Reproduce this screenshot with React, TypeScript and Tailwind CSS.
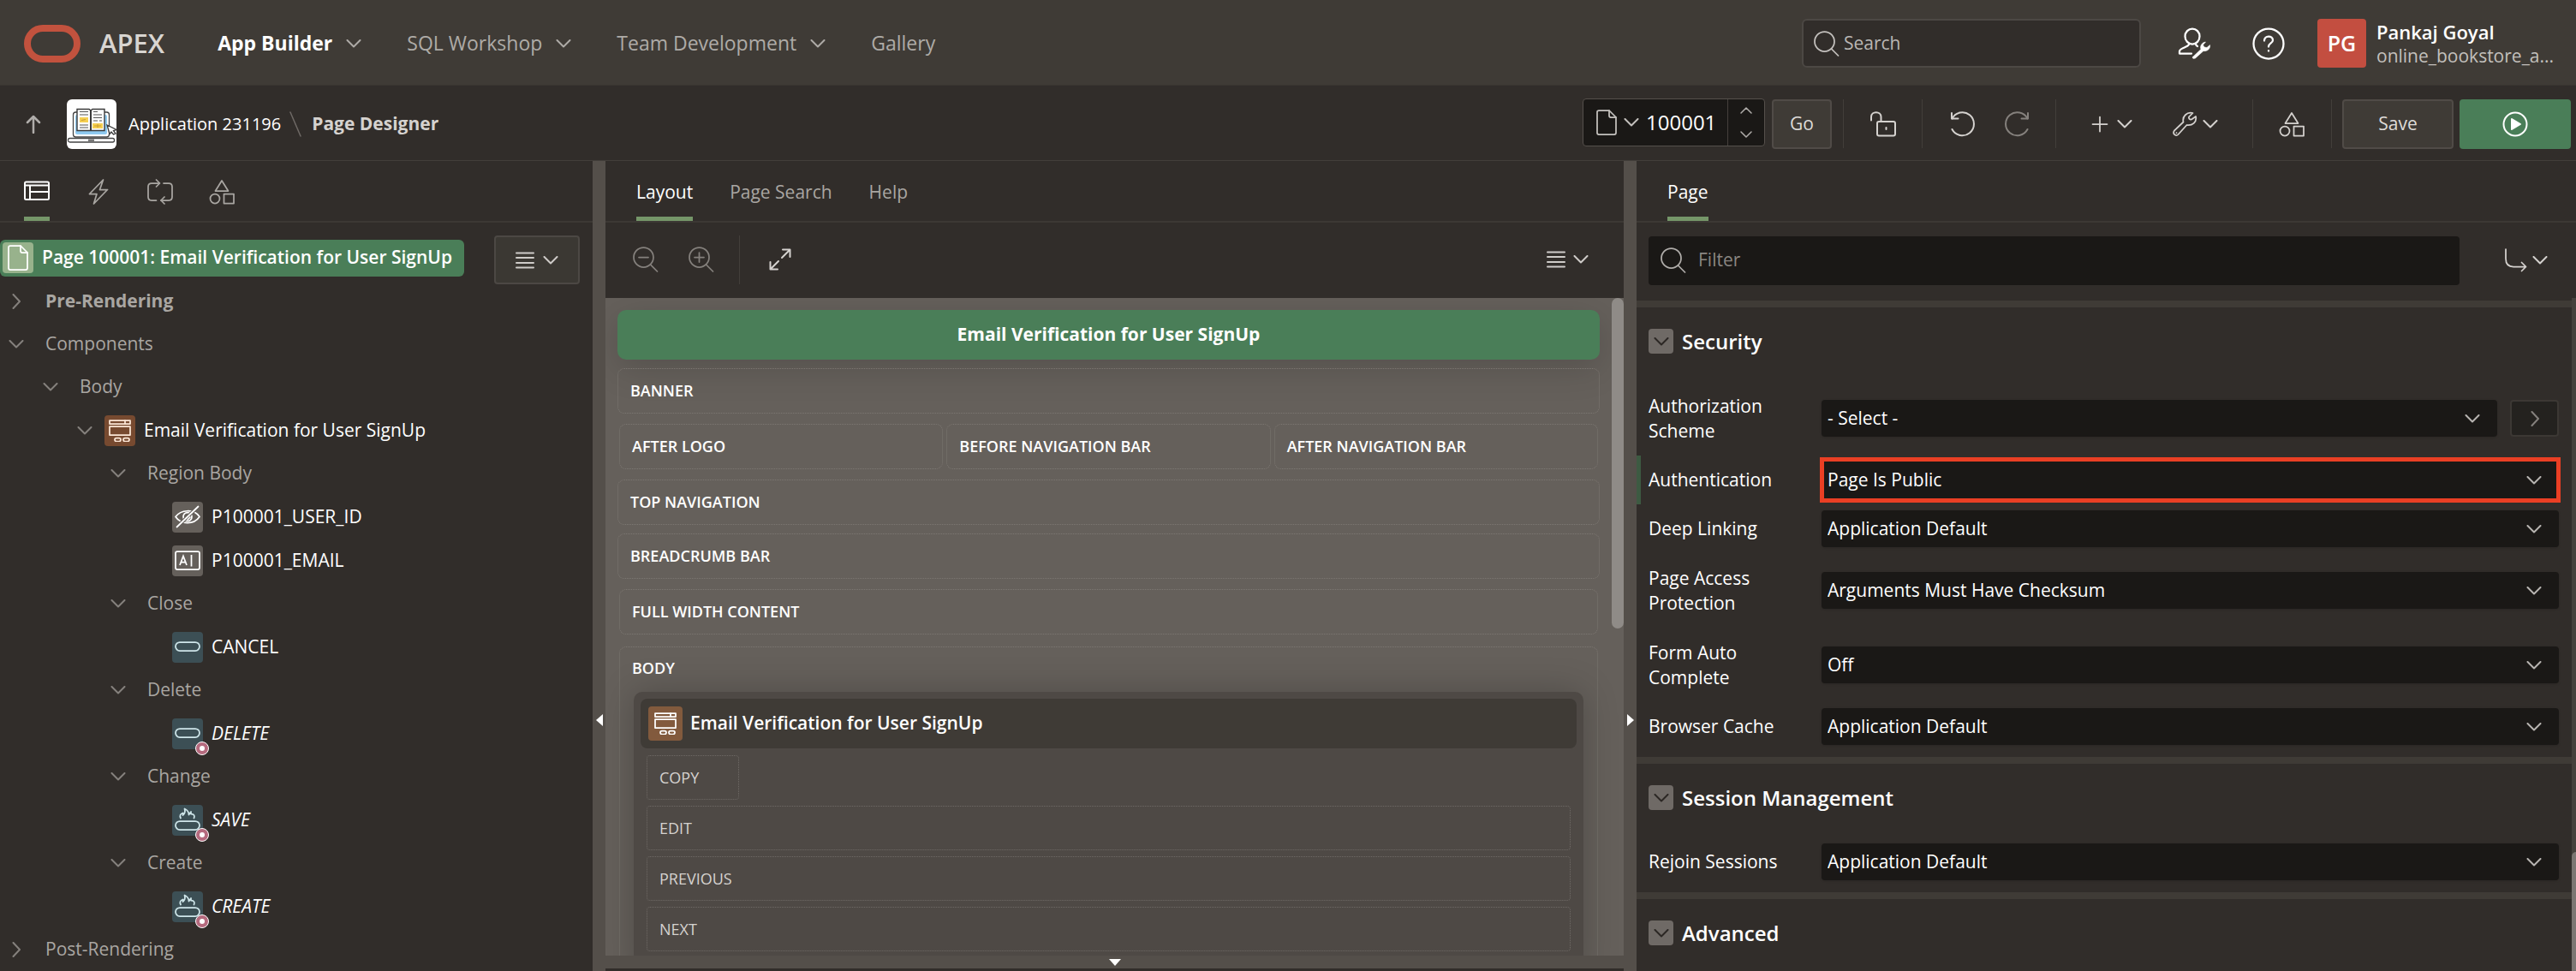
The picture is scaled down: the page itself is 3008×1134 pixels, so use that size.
import type { ReactNode } from "react";

/* ---------- icons ---------- */

type IconProps = { w: number; h: number; className?: string; sw?: number; children: ReactNode };

function Icon({ w, h, className = "", sw = 2, children }: IconProps) {
  return (
    <svg
      width={w}
      height={h}
      viewBox={`0 0 ${w} ${h}`}
      fill="none"
      stroke="currentColor"
      strokeWidth={sw}
      strokeLinecap="round"
      strokeLinejoin="round"
      aria-hidden="true"
      className={`shrink-0 ${className}`}
    >
      {children}
    </svg>
  );
}

const ChevronDown = ({ className = "" }: { className?: string }) => (
  <Icon w={18} h={10} className={className}>
    <path d="M1.5 1L9 8.5L16.5 1" />
  </Icon>
);

const ChevronRight = ({ className = "" }: { className?: string }) => (
  <Icon w={18} h={18} className={className}>
    <path d="M5.5 1L13 9L5.5 17" />
  </Icon>
);

const SmallChevron = ({ up = false }: { up?: boolean }) => (
  <Icon w={14} h={8} sw={1.5} className="text-[#b0adaa]">
    <path d={up ? "M1 7L7 1L13 7" : "M1 1L7 7L13 1"} />
  </Icon>
);

const Lines = () => (
  <Icon w={22} h={20} className="text-[#cfccc9]">
    <path d="M1 1.5H21M1 7H21M1 13H21M1 18.5H21" />
  </Icon>
);

const Magnifier = ({ className = "", children }: { className?: string; children?: ReactNode }) => (
  <Icon w={30} h={30} sw={1.75} className={className}>
    <circle cx="12.5" cy="12.5" r="11.5" />
    <path d="M20.5 21L28.5 29" />
    {children}
  </Icon>
);

const Shapes = ({ className = "" }: { className?: string }) => (
  <Icon w={30} h={30} sw={1.75} className={className}>
    <path d="M15 2L22.5 14H7.5Z" />
    <circle cx="7" cy="23" r="5.5" />
    <rect x="17.5" y="17.5" width="11.5" height="11" />
  </Icon>
);

const Page = ({ className = "" }: { className?: string }) => (
  <Icon w={24} h={30} sw={1.75} className={className}>
    <path d="M3 1H15L23 9V27Q23 29 21 29H3Q1 29 1 27V3Q1 1 3 1Z" />
    <path d="M15 1V7Q15 9 17 9H23" />
  </Icon>
);

const RegionGlyph = ({ className = "" }: { className?: string }) => (
  <Icon w={26} h={26} sw={1.75} className={className}>
    <rect x="1" y="1" width="24" height="4" />
    <path d="M19 1V5" />
    <rect x="1" y="8" width="24" height="10" />
    <rect x="7" y="21.5" width="7" height="4" rx="2" />
    <rect x="17" y="21.5" width="7" height="4" rx="2" />
  </Icon>
);

const HiddenGlyph = () => (
  <Icon w={36} h={36} sw={1.75} className="text-white">
    <path d="M4 17.5C10 9.5 25 7.5 32 17.5C25 27.5 10 26.5 4 17.5Z" />
    <circle cx="18" cy="17.5" r="5" />
    <path d="M30.5 5.5L5.5 29.5" stroke="#65605b" strokeWidth="4" />
    <path d="M30.5 5.5L5.5 29.5" />
    <path d="M16.500 19.500L19.500 16.500" transform="translate(1.500 1.500)" />
  </Icon>
);

const TextFieldGlyph = () => (
  <svg width={36} height={36} viewBox="0 0 36 36" fill="none" stroke="white" strokeWidth={1.75} aria-hidden="true">
    <rect x="4" y="7" width="28" height="21" rx="2" />
    <path d="M22.5 11V24.5" />
    <path d="M9 23L13 12.5L17 23M10.5 19.5H15.5" />
  </svg>
);

const ButtonGlyph = ({ hot = false }: { hot?: boolean }) => (
  <Icon w={36} h={36} sw={1.75} className="text-[#cfe6ea]">
    {hot ? (
      <>
        <rect x="4" y="19" width="28" height="10" rx="5" />
        <path d="M10 15.5C8.5 12.5 9.5 10.5 12.5 9.5V12C15 10 15.5 7.5 14.5 4.5C18 6 19.5 8.5 19.5 11.5L22 8V10.5C26 10.5 26.5 13 25.5 15.5" />
      </>
    ) : (
      <rect x="4" y="12" width="28" height="10" rx="5" />
    )}
  </Icon>
);

const AppLogo = () => (
  <svg width={58} height={58} viewBox="0 0 58 58" className="shrink-0 rounded-md bg-white" fill="none" aria-hidden="true">
    <rect x="7.5" y="15" width="42" height="29" rx="3" stroke="#444" strokeWidth="1.3" fill="white" />
    <rect x="10" y="18" width="37" height="23" rx="2" fill="#8fcaf0" />
    <path d="M12 11.5H26L28 13L30 11.5H44V36.5H12Z" fill="white" stroke="#3a3a3a" strokeWidth="1.4" />
    <path d="M28 13V36.5" stroke="#3a3a3a" strokeWidth="2" />
    <path d="M15 14.5H25M15 18H25M15 30H25M15 33H25M31 14.5H36M31 18H41M31 21.5H41M31 25H36M38 25H41" stroke="#555" strokeWidth="1.2" />
    <rect x="15" y="21" width="10" height="6" fill="#f5cf52" />
    <rect x="30" y="28" width="12" height="6" fill="#f5cf52" />
    <path d="M17 24.5L22 23.5M32 31H40M36 29V33" stroke="#c89b2e" />
    <path d="M47 30L58 35.5L54.5 36.5L57 40L54.5 41L52 38L50 40.5Z" fill="white" stroke="#3a3a3a" strokeWidth="1.3" />
    <rect x="1.5" y="45.5" width="54" height="4.5" rx="2" fill="white" stroke="#444" strokeWidth="1.3" />
    <rect x="25" y="46.5" width="7" height="2.5" fill="#777" />
  </svg>
);

/* ---------- header ---------- */

const NAV = [
  { label: "App Builder", menu: true, active: true },
  { label: "SQL Workshop", menu: true, active: false },
  { label: "Team Development", menu: true, active: false },
  { label: "Gallery", menu: false, active: false },
];

function Header() {
  return (
    <header className="flex h-[100px] shrink-0 items-center border-b border-[#393531] bg-[#3f3b36] pt-[2px] pr-5 pl-7">
      <svg width="66" height="44" viewBox="0 0 66 44" fill="none" aria-hidden="true" className="shrink-0">
        <rect x="4" y="4" width="58" height="36" rx="18" stroke="#c2523e" strokeWidth="8" />
      </svg>
      <span className="ml-[22px] text-[31px] font-semibold text-[#d8d5d1]">APEX</span>
      <nav className="ml-[62px] flex items-center gap-[53px]">
        {NAV.map((n) => (
          <a
            key={n.label}
            href="#"
            className={
              n.active
                ? "flex items-center gap-4 text-[23px] font-bold whitespace-nowrap text-white"
                : "flex items-center gap-4 text-[23px] whitespace-nowrap text-[#aeaba7]"
            }
          >
            {n.label}
            {n.menu && <ChevronDown className="text-[#aeaba7]" />}
          </a>
        ))}
      </nav>
      <label className="ml-auto flex h-[57px] w-[396px] items-center rounded-md border-2 border-[#4c4844] bg-[#312d2a] pl-3">
        <Magnifier className="text-[#c4c1be]" />
        <input
          type="search"
          placeholder="Search"
          aria-label="Search"
          className="ml-[5px] min-w-0 flex-1 bg-transparent text-[21px] text-white outline-none placeholder:text-[#bab7b4]"
        />
      </label>
      <button type="button" aria-label="Administration" className="ml-[43px] text-white">
        <Icon w={39} h={37} sw={2.25}>
          <ellipse cx="17" cy="10.5" rx="8.5" ry="9" />
          <path d="M13 20C12 22 10 22.5 6.5 24C3.5 25.3 2 26 2 28V30.5H16" />
          <path d="M21 19.5C21.3 21 22 21.5 23 22" />
          <path
            d="M17.5 34.5L27 25.5C25.5 22 28 17.5 32.5 17L29.5 20.5L31 23L34 23.5L37.5 20.5C38.5 25 34 28.5 30 27.5L20.5 36C18 37 16.5 36 17.5 34.5Z"
            fill="currentColor"
            strokeWidth="0.5"
          />
        </Icon>
      </button>
      <button type="button" aria-label="Help" className="ml-[48px] text-white">
        <Icon w={38} h={38} sw={2.25}>
          <circle cx="19" cy="19" r="17.5" />
          <path d="M14 15.5C14 9 24 9 24 15C24 18.5 19 18.5 19 22.5" />
          <path d="M19 27V27.5" />
        </Icon>
      </button>
      <button type="button" className="ml-[38px] flex items-center text-left">
        <span className="flex size-[57px] items-center justify-center rounded bg-[#c34e40] text-[25px] font-semibold text-white">
          PG
        </span>
        <span className="ml-3 flex w-[213px] flex-col">
          <span className="text-[22px] leading-7 font-semibold text-white">Pankaj Goyal</span>
          <span className="text-[21px] leading-7 whitespace-nowrap text-[#c3c0bd]">online_bookstore_a...</span>
        </span>
      </button>
    </header>
  );
}

/* ---------- page toolbar ---------- */

const Rule = ({ className = "" }: { className?: string }) => (
  <span className={`h-[57px] w-px shrink-0 bg-[#423e3a] ${className}`} />
);

function Toolbar() {
  return (
    <div className="flex h-[88px] shrink-0 items-center border-b border-[#423e3a] pt-[2px] pr-[6px] pl-[30px]">
      <button type="button" aria-label="Up" className="text-[#b0adaa]">
        <Icon w={18} h={22} sw={2.5}>
          <path d="M9 21V2M2 9L9 2L16 9" />
        </Icon>
      </button>
      <a href="#" className="ml-[30px] flex items-center gap-[14px] text-[20px] font-medium whitespace-nowrap text-white">
        <AppLogo />
        Application 231196
      </a>
      <Icon w={14} h={30} sw={1.5} className="ml-[10px] text-[#6f6a66]">
        <path d="M1 1L13 29" />
      </Icon>
      <h1 className="ml-3 text-[21px] font-bold whitespace-nowrap text-[#d5d2cf]">Page Designer</h1>

      <div className="mb-1 ml-auto flex h-[56px] w-[213px] items-center rounded border border-[#55504c] bg-[#1a1816]">
        <button type="button" aria-label="Select page" className="ml-[15px] flex items-center gap-2 text-[#c4c1be]">
          <Page />
          <ChevronDown />
        </button>
        <input
          type="text"
          aria-label="Page number"
          defaultValue="100001"
          className="ml-2 w-full min-w-0 flex-1 bg-transparent text-[24px] font-medium text-white outline-none"
        />
        <div className="flex h-full w-[43px] flex-col items-center justify-between border-l border-[#45403c] py-[9px]">
          <button type="button" aria-label="Next page" className="flex">
            <SmallChevron up />
          </button>
          <button type="button" aria-label="Previous page" className="flex">
            <SmallChevron />
          </button>
        </div>
      </div>
      <button type="button" className="ml-2 h-[58px] w-[70px] rounded border-2 border-[#504b47] bg-[#3f3b36] text-[21px] text-[#dedbd8]">
        Go
      </button>
      <Rule className="ml-[13px]" />
      <button type="button" aria-label="Page unlocked" className="ml-[31px] text-[#d5d2cf]">
        <Icon w={30} h={30}>
          <path d="M1 10.5V6.5C1 -0.5 12.5 -0.5 12.5 6.5V11" />
          <rect x="8" y="12" width="21" height="16.5" rx="2" />
          <path d="M18.5 19V21" />
        </Icon>
      </button>
      <Rule className="ml-[30px]" />
      <button type="button" aria-label="Undo" className="ml-8 text-[#d5d2cf]">
        <Icon w={30} h={30}>
          <path d="M2 2V8.5H9.5" />
          <path d="M2.5 8.5A13.5 13.5 0 1 1 2.5 21" />
        </Icon>
      </button>
      <button type="button" aria-label="Redo" className="ml-[33px] text-[#85817d]">
        <Icon w={30} h={30}>
          <path d="M28 2V8.5H20.5" />
          <path d="M27.5 8.5A13.5 13.5 0 1 0 27.5 21" />
        </Icon>
      </button>
      <Rule className="ml-[30px]" />
      <button type="button" aria-label="Create" className="ml-[41px] flex items-center gap-[10px] text-[#d5d2cf]">
        <Icon w={20} h={20} sw={1.75}>
          <path d="M10 1.5V18.5M1.5 10H18.5" />
        </Icon>
        <ChevronDown />
      </button>
      <button type="button" aria-label="Utilities" className="ml-[47px] flex items-center gap-[6px] text-[#d5d2cf]">
        <Icon w={29} h={30} sw={1.75}>
          <path d="M2 22.5L12.5 12.5C11 6 16.5 0.5 23.5 2L19 6.5C18.5 8.5 20 10 22 9.5L27 6C28.5 12.5 23 17 16.5 16L6.5 27C3.5 30 -0.5 26 2 22.5Z" />
          <path d="M4.5 25V25.2" />
        </Icon>
        <ChevronDown />
      </button>
      <Rule className="ml-10" />
      <button type="button" aria-label="Shared components" className="ml-[30px] text-[#d5d2cf]">
        <Shapes />
      </button>
      <Rule className="ml-[31px]" />
      <button type="button" className="ml-3 h-[58px] w-[130px] rounded border-2 border-[#504b47] bg-[#3f3b36] text-[21px] text-[#dedbd8]">
        Save
      </button>
      <button type="button" aria-label="Save and run page" className="ml-[7px] flex h-[58px] w-[130px] items-center justify-center rounded bg-[#4a7e58] text-white">
        <Icon w={30} h={30}>
          <circle cx="15" cy="15" r="13.5" />
          <path d="M11 9L21 15L11 21Z" fill="currentColor" />
        </Icon>
      </button>
    </div>
  );
}

/* ---------- left pane: rendering tree ---------- */

type NodeIcon = "region" | "hidden" | "text" | "button" | "hot";
type TreeNode = {
  label: string;
  level: 0 | 1 | 2 | 3 | 4;
  open?: boolean;
  icon?: NodeIcon;
  conditional?: boolean;
  bold?: boolean;
};

const TREE: TreeNode[] = [
  { label: "Pre-Rendering", level: 0, open: false, bold: true },
  { label: "Components", level: 0, open: true },
  { label: "Body", level: 1, open: true },
  { label: "Email Verification for User SignUp", level: 2, open: true, icon: "region" },
  { label: "Region Body", level: 3, open: true },
  { label: "P100001_USER_ID", level: 4, icon: "hidden" },
  { label: "P100001_EMAIL", level: 4, icon: "text" },
  { label: "Close", level: 3, open: true },
  { label: "CANCEL", level: 4, icon: "button" },
  { label: "Delete", level: 3, open: true },
  { label: "DELETE", level: 4, icon: "button", conditional: true },
  { label: "Change", level: 3, open: true },
  { label: "SAVE", level: 4, icon: "hot", conditional: true },
  { label: "Create", level: 3, open: true },
  { label: "CREATE", level: 4, icon: "hot", conditional: true },
  { label: "Post-Rendering", level: 0, open: false },
];

const INDENT = ["pl-[10px]", "pl-[50px]", "pl-[90px]", "pl-[129px]", "pl-[169px]"];

const TILE: Record<NodeIcon, string> = {
  region: "bg-[#774a30]",
  hidden: "bg-[#65605b]",
  text: "bg-[#65605b]",
  button: "bg-[#3c4f55]",
  hot: "bg-[#3c4f55]",
};

function NodeTile({ icon, conditional }: { icon: NodeIcon; conditional?: boolean }) {
  return (
    <span className={`relative ml-[14px] flex size-9 shrink-0 items-center justify-center rounded ${TILE[icon]}`}>
      {icon === "region" && <RegionGlyph className="text-[#fbe6d6]" />}
      {icon === "hidden" && <HiddenGlyph />}
      {icon === "text" && <TextFieldGlyph />}
      {icon === "button" && <ButtonGlyph />}
      {icon === "hot" && <ButtonGlyph hot />}
      {conditional && (
        <span className="absolute -right-[7px] -bottom-[7px] flex size-4 items-center justify-center rounded-full border border-white bg-[#b56a7e]">
          <span className="size-[6px] rounded-full bg-white" />
        </span>
      )}
    </span>
  );
}

function labelClass(n: TreeNode) {
  if (n.icon) {
    return n.conditional
      ? "ml-[10px] font-medium whitespace-nowrap text-white italic"
      : "ml-[10px] font-medium whitespace-nowrap text-white";
  }
  return n.bold
    ? "ml-[25px] font-bold whitespace-nowrap text-[#a9a6a2]"
    : "ml-[25px] whitespace-nowrap text-[#a9a6a2]";
}

function TreePane() {
  return (
    <section aria-label="Rendering" className="flex w-[692px] shrink-0 flex-col">
      <div role="tablist" className="flex h-[72px] shrink-0 gap-[42px] border-b-2 border-[#3c3834] pl-7 text-[#a9a6a2]">
        <button role="tab" type="button" aria-label="Rendering" aria-selected="true" className="flex items-center border-b-[5px] border-[#759669] pt-[5px] text-white">
          <Icon w={30} h={24}>
            <rect x="1" y="1.5" width="28" height="20.5" rx="1.5" />
            <path d="M1 5.5H29M7 5.5V22M7 13H29" />
          </Icon>
        </button>
        <button role="tab" type="button" aria-label="Dynamic Actions" className="flex items-center pt-[2px]">
          <Icon w={30} h={30} sw={1.75}>
            <path d="M20.5 1L4.5 17.5H13L9.5 29L25.5 12.5H16.5Z" />
          </Icon>
        </button>
        <button role="tab" type="button" aria-label="Processing" className="flex items-center pt-[2px]">
          <Icon w={30} h={30} sw={1.75}>
            <path d="M10.5 25H5Q1 25 1 21V9Q1 5 5 5H14M19 5H25Q29 5 29 9V21Q29 25 25 25H16" />
            <path d="M10.5 1L14.5 5L10.5 9M20 21L16 25L20 29" />
          </Icon>
        </button>
        <button role="tab" type="button" aria-label="Page Shared Components" className="flex items-center pt-[2px]">
          <Shapes />
        </button>
      </div>

      <div className="flex min-h-0 flex-1 items-start overflow-hidden pt-[15px] pr-[15px]">
        <ul className="min-w-0 flex-1 text-[21px]">
          <li className="flex h-[52px] items-center">
            <button type="button" className="flex h-[43px] items-center rounded-md bg-[#4a7e58] pr-[14px] pl-[3px] font-semibold whitespace-nowrap text-white">
              <span className="mr-[10px] flex size-9 items-center justify-center rounded bg-[#98b28c]">
                <Page />
              </span>
              Page 100001: Email Verification for User SignUp
            </button>
          </li>
          {TREE.map((n) => (
            <li key={n.label} className={`flex items-center ${n.icon ? "h-[51px]" : "h-[50px]"} ${INDENT[n.level]}`}>
              {n.open === undefined ? (
                <span className="w-[18px] shrink-0" />
              ) : (
                <button type="button" aria-label={`Toggle ${n.label}`} className="shrink-0 text-[#85817d]">
                  {n.open ? <ChevronDown /> : <ChevronRight />}
                </button>
              )}
              {n.icon && <NodeTile icon={n.icon} conditional={n.conditional} />}
              <span className={labelClass(n)}>{n.label}</span>
            </li>
          ))}
        </ul>
        <button type="button" aria-label="Menu" className="flex h-[57px] w-[100px] shrink-0 items-center justify-center gap-[10px] rounded border-2 border-[#4c4844] bg-[#3b3833] text-[#cfccc9]">
          <Lines />
          <ChevronDown />
        </button>
      </div>
    </section>
  );
}

/* ---------- centre pane: layout canvas ---------- */

const BOX = "flex h-[53px] items-center rounded-lg border border-dotted border-[#7d7873] px-[14px] text-[18px] font-semibold text-white";
const SLOT = "flex h-[52px] items-center rounded border border-dotted border-[#6f6a66] px-[14px] text-[18px] text-[#d5d2cf]";

function LayoutPane() {
  return (
    <section aria-label="Layout" className="flex min-w-0 flex-1 flex-col">
      <div role="tablist" className="flex h-[72px] shrink-0 gap-[43px] border-b-2 border-[#3c3834] pl-9 text-[21px] text-[#a9a6a2]">
        <button role="tab" type="button" aria-selected="true" className="border-b-[5px] border-[#759669] pt-[9px] font-medium text-white">
          Layout
        </button>
        <button role="tab" type="button" className="pt-1 whitespace-nowrap">
          Page Search
        </button>
        <button role="tab" type="button" className="pt-1">
          Help
        </button>
      </div>
      <div className="flex h-[88px] shrink-0 items-center pr-[41px] pb-[2px] pl-8 text-[#85817d]">
        <button type="button" aria-label="Zoom out">
          <Magnifier>
            <path d="M7 12.5H18" />
          </Magnifier>
        </button>
        <button type="button" aria-label="Zoom in" className="ml-[35px]">
          <Magnifier>
            <path d="M7 12.5H18M12.5 7V18" />
          </Magnifier>
        </button>
        <Rule className="ml-[29px]" />
        <button type="button" aria-label="Expand" className="ml-[34px] text-[#d5d2cf]">
          <Icon w={26} h={26}>
            <path d="M16 1.5H24.5V10M24.5 1.5L15 11M10 24.5H1.5V16M1.5 24.5L11 15" />
          </Icon>
        </button>
        <button type="button" aria-label="Layout menu" className="ml-auto flex items-center gap-[9px] text-[#cfccc9]">
          <Lines />
          <ChevronDown />
        </button>
      </div>

      <div className="flex min-h-0 flex-1 items-start overflow-hidden bg-[#65605b]">
        <div className="min-w-0 flex-1 px-[14px] pt-[14px]">
          <div className="flex h-[58px] items-center justify-center rounded-[10px] bg-[#4a7e58] text-[21px] font-bold text-white shadow-[0_10px_40px_rgba(0,0,0,0.16)]">
            Email Verification for User SignUp
          </div>
          <div className={`mt-[10px] ${BOX}`}>BANNER</div>
          <div className="mx-[2px] mt-3 grid grid-cols-3 gap-1">
            <div className={BOX}>AFTER LOGO</div>
            <div className={BOX}>BEFORE NAVIGATION BAR</div>
            <div className={BOX}>AFTER NAVIGATION BAR</div>
          </div>
          <div className={`mt-3 ${BOX}`}>TOP NAVIGATION</div>
          <div className={`mt-[10px] ${BOX}`}>BREADCRUMB BAR</div>
          <div className={`mx-[2px] mt-3 mb-[14px] ${BOX}`}>FULL WIDTH CONTENT</div>
          <div className="mx-[2px] flex flex-col rounded-lg border border-dotted border-[#7d7873] px-[14px] pb-8">
            <h2 className="pb-[3px] text-[18px] leading-[49px] font-semibold text-white">BODY</h2>
            <div className="mx-[2px] flex flex-col gap-2 rounded-[10px] bg-[#4e4945] px-2 pt-2 pb-8 shadow-[0_0_40px_rgba(0,0,0,0.22)]">
              <div className="flex h-[58px] items-center rounded-lg bg-[#3f3b36] pl-[9px] text-[21px] font-semibold text-white">
                <span className="mr-[9px] flex size-10 items-center justify-center rounded bg-[#825a3d]">
                  <RegionGlyph className="text-white" />
                </span>
                Email Verification for User SignUp
              </div>
              <div className="mx-[7px] flex flex-col gap-[7px]">
                <div className={`w-[108px] ${SLOT}`}>COPY</div>
                <div className={SLOT}>EDIT</div>
                <div className={SLOT}>PREVIOUS</div>
                <div className={SLOT}>NEXT</div>
              </div>
            </div>
          </div>
        </div>
        <div className="h-[386px] w-[14px] shrink-0 rounded-full bg-[#8f8b87]" />
      </div>
      <div className="flex h-[15px] shrink-0 items-center justify-center bg-[#544f4a]">
        <span className="border-x-[7px] border-t-8 border-x-transparent border-t-white" />
      </div>
      <div className="h-[3px] shrink-0" />
    </section>
  );
}

function Splitter({ side }: { side: "left" | "right" }) {
  return (
    <div className="flex w-[15px] shrink-0 justify-center bg-[#544f4a] pt-[646px]">
      <span
        className={
          side === "left"
            ? "h-0 border-y-[7px] border-r-8 border-y-transparent border-r-white"
            : "h-0 border-y-[7px] border-l-8 border-y-transparent border-l-white"
        }
      />
    </div>
  );
}

/* ---------- right pane: property editor ---------- */

type Field = { id: string; label: string; value: string; tall?: boolean; marked?: boolean; link?: boolean };

const SECURITY: Field[] = [
  { id: "authorization", label: "Authorization Scheme", value: "- Select -", tall: true, link: true },
  { id: "authentication", label: "Authentication", value: "Page Is Public", marked: true },
  { id: "deep-linking", label: "Deep Linking", value: "Application Default" },
  { id: "page-access", label: "Page Access Protection", value: "Arguments Must Have Checksum", tall: true },
  { id: "auto-complete", label: "Form Auto Complete", value: "Off", tall: true },
  { id: "browser-cache", label: "Browser Cache", value: "Application Default" },
];

const SESSION: Field[] = [{ id: "rejoin", label: "Rejoin Sessions", value: "Application Default" }];

function FieldRow({ f }: { f: Field }) {
  return (
    <div
      className={`flex items-center border-l-[5px] pr-[15px] pl-[9px] ${f.tall ? "min-h-[87px]" : "min-h-[57px]"} ${
        f.marked ? "border-[#3d5a42]" : "border-transparent"
      }`}
    >
      <label htmlFor={f.id} className="mr-8 w-[170px] shrink-0 text-[21px] leading-[29px] font-medium text-white">
        {f.label}
      </label>
      <div className="relative flex min-w-0 flex-1 items-center">
        <select
          id={f.id}
          defaultValue={f.value}
          className="h-[43px] w-full appearance-none rounded bg-[#1a1816] pr-12 pl-[7px] text-[21px] font-medium text-white shadow-sm"
        >
          <option>{f.value}</option>
        </select>
        <ChevronDown className="pointer-events-none absolute right-5 text-[#b8b5b2]" />
        {f.marked && <span className="pointer-events-none absolute -inset-x-[2px] -inset-y-[5px] border-[5px] border-[#ea3f24]" />}
      </div>
      {f.link && (
        <button type="button" aria-label="Go to component" className="ml-[15px] flex h-[43px] w-[57px] shrink-0 items-center justify-center rounded border-2 border-[#3c3834] bg-[#24221f] text-[#85817d]">
          <ChevronRight />
        </button>
      )}
    </div>
  );
}

function Section({ title, fields }: { title: string; fields: Field[] }) {
  return (
    <section className="border-t-8 border-[#3f3b36]">
      <h2 className="flex h-[79px] items-center gap-[10px] pl-[14px] text-[24px] font-semibold text-white">
        <button type="button" aria-label={`Toggle ${title}`} className="flex size-[29px] items-center justify-center rounded bg-[#6f6a66] text-[#2b2724]">
          <ChevronDown />
        </button>
        {title}
      </h2>
      <div className="py-[7px]">
        {fields.map((f) => (
          <FieldRow key={f.id} f={f} />
        ))}
      </div>
    </section>
  );
}

function PropertyPane() {
  return (
    <section aria-label="Property Editor" className="flex w-[1097px] shrink-0 flex-col">
      <div role="tablist" className="flex h-[72px] shrink-0 border-b-2 border-[#3c3834] pl-9 text-[21px]">
        <button role="tab" type="button" aria-selected="true" className="border-b-[5px] border-[#759669] pt-[9px] font-medium text-white">
          Page
        </button>
      </div>
      <div className="flex h-[88px] shrink-0 items-center pr-[33px] pl-[14px]">
        <label className="flex h-[57px] min-w-0 flex-1 items-center rounded bg-[#1a1816] pl-[14px]">
          <Magnifier className="text-[#b0adaa]" />
          <input
            type="search"
            placeholder="Filter"
            aria-label="Filter properties"
            className="ml-[14px] min-w-0 flex-1 bg-transparent text-[21px] text-white outline-none placeholder:text-[#8a8682]"
          />
        </label>
        <button type="button" aria-label="Go to group" className="ml-[52px] flex items-center gap-[6px] text-[#d5d2cf]">
          <Icon w={27} h={28} sw={1.75}>
            <path d="M2 1V12Q2 21.5 11 21.5H25.5M20.5 16.5L25.5 21.5L20.5 26.5" />
          </Icon>
          <ChevronDown />
        </button>
      </div>
      <div className="flex min-h-0 flex-1 overflow-hidden">
        <div className="min-w-0 flex-1 pt-[3px]">
          <Section title="Security" fields={SECURITY} />
          <Section title="Session Management" fields={SESSION} />
          <Section title="Advanced" fields={[]} />
        </div>
        <div className="flex w-[5px] shrink-0 flex-col bg-[#45413c]">
          <span className="mt-auto h-[139px] rounded-tl-full bg-[#7b7672]" />
        </div>
      </div>
    </section>
  );
}

export default function App() {
  return (
    <div className="flex h-screen min-w-[2400px] flex-col overflow-hidden bg-[#312d2a] font-['Open_Sans','Noto_Sans',sans-serif]">
      <Header />
      <Toolbar />
      <main className="flex min-h-0 flex-1">
        <TreePane />
        <Splitter side="left" />
        <LayoutPane />
        <Splitter side="right" />
        <PropertyPane />
      </main>
    </div>
  );
}
